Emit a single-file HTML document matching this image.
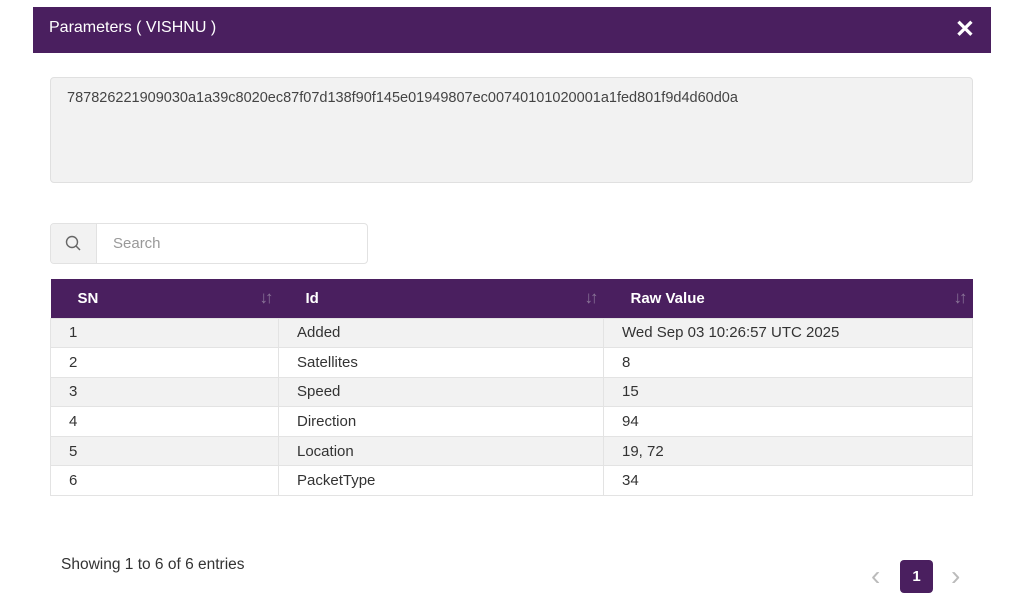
<!DOCTYPE html>
<html><head><meta charset="utf-8"><style>
*{box-sizing:border-box;margin:0;padding:0}
body{width:1024px;height:595px;background:#fff;font-family:"Liberation Sans",sans-serif;color:#333;position:relative;overflow:hidden}
.hdr{position:absolute;left:33px;top:7px;width:958px;height:46px;background:#4a1f5f;color:#fff}
.hdr .t{position:absolute;left:16px;top:12px;font-size:16px}
.hdr .x{position:absolute;right:16px;top:8px;font-size:24px;font-weight:bold}
.raw{position:absolute;left:50px;top:77px;width:923px;height:106px;background:#f2f2f2;border:1px solid #e0e0e0;border-radius:4px;padding:12px 16px;font-size:14.5px;color:#444}
.srch{position:absolute;left:50px;top:223px;width:318px;height:41px;border:1px solid #e2e2e2;border-radius:4px;overflow:hidden}
.srch .ic{position:absolute;left:0;top:0;width:46px;height:100%;background:#f2f2f2;border-right:1px solid #e2e2e2}
.srch .ph{position:absolute;left:62px;top:11px;font-size:15px;color:#999}
table{position:absolute;left:50px;top:279px;width:923px;border-collapse:collapse;font-size:15px}
th{background:#4a1f5f;color:#fff;height:39px;text-align:left;font-weight:bold;position:relative;padding-left:27px}
th span{position:absolute;right:8px;top:9px;color:#8a7598;font-size:17px;font-weight:normal;letter-spacing:-3px}
td{height:29.6px;border:1px solid #e3e3e3;padding-left:18px;color:#333}
tr:nth-child(even) td{background:#f2f2f2}
.foot{position:absolute;left:61px;top:556px;font-size:15.5px;color:#333}
.pg{position:absolute;left:900px;top:560px;width:33px;height:33px;background:#4a1f5f;color:#fff;border-radius:4px;text-align:center;line-height:33px;font-size:15px;font-weight:bold}
.ar{position:absolute;top:562px;color:#bbb;font-size:28px;line-height:28px}
</style></head><body>
<div class="hdr"><div class="t">Parameters ( VISHNU )</div><div class="x">✕</div></div>
<div class="raw">787826221909030a1a39c8020ec87f07d138f90f145e01949807ec00740101020001a1fed801f9d4d60d0a</div>
<div class="srch"><div class="ic"><svg width="46" height="40" viewBox="0 0 46 40"><circle cx="21" cy="18" r="5.5" fill="none" stroke="#666" stroke-width="1.4"/><line x1="25" y1="22" x2="29" y2="26" stroke="#666" stroke-width="1.5"/></svg></div><div class="ph">Search</div></div>
<table>
<tr><th style="width:228px">SN<span>↓↑</span></th><th style="width:325px">Id<span>↓↑</span></th><th>Raw Value<span>↓↑</span></th></tr>
<tr><td>1</td><td>Added</td><td>Wed Sep 03 10:26:57 UTC 2025</td></tr>
<tr><td>2</td><td>Satellites</td><td>8</td></tr>
<tr><td>3</td><td>Speed</td><td>15</td></tr>
<tr><td>4</td><td>Direction</td><td>94</td></tr>
<tr><td>5</td><td>Location</td><td>19, 72</td></tr>
<tr><td>6</td><td>PacketType</td><td>34</td></tr>
</table>
<div class="foot">Showing 1 to 6 of 6 entries</div>
<div class="ar" style="left:871px">‹</div>
<div class="pg">1</div>
<div class="ar" style="left:951px">›</div>
</body></html>
